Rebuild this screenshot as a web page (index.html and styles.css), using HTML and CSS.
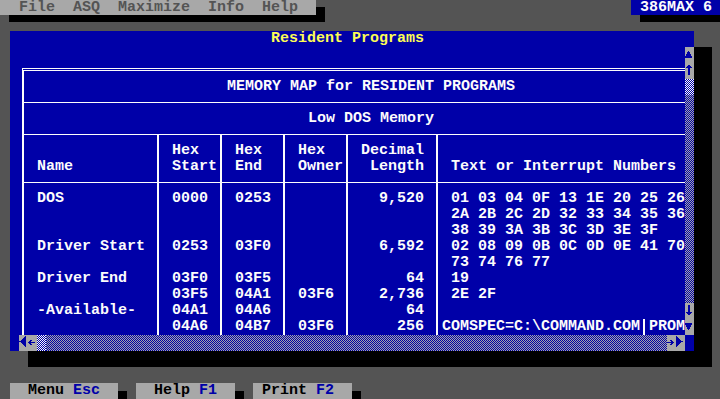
FILE: index.html
```html
<!DOCTYPE html>
<html lang="en">
<head>
<meta charset="utf-8">
<title>386MAX - Resident Programs</title>
<link rel="stylesheet" href="styles.css">
</head>
<body>
<div class="screen">
  <header class="topbar">
    <nav class="menubar"><span>File</span><span>ASQ</span><span>Maximize</span><span>Info</span><span>Help</span></nav>
    <div class="brand">386MAX 6</div>
  </header>

  <section class="window">
    <h1 class="wtitle">Resident Programs</h1>
    <div class="wbody">
      <div class="viewport">
        <div class="maptable">
          <div class="cap">MEMORY MAP for RESIDENT PROGRAMS</div>
          <div class="cap">Low DOS Memory</div>
          <div class="tr thead">
            <div class="td"><span>Name</span></div>
            <div class="td"><span>Hex</span><span>Start</span></div>
            <div class="td"><span>Hex</span><span>End</span></div>
            <div class="td"><span>Hex</span><span>Owner</span></div>
            <div class="td num"><span>Decimal</span><span>Length</span></div>
            <div class="td"><span>Text or Interrupt Numbers</span></div>
          </div>
          <div class="tr first">
            <div class="td">DOS</div><div class="td">0000</div><div class="td">0253</div><div class="td"></div><div class="td num">9,520</div><div class="td">01 03 04 0F 13 1E 20 25 26</div>
          </div>
          <div class="tr">
            <div class="td"></div><div class="td"></div><div class="td"></div><div class="td"></div><div class="td num"></div><div class="td">2A 2B 2C 2D 32 33 34 35 36</div>
          </div>
          <div class="tr">
            <div class="td"></div><div class="td"></div><div class="td"></div><div class="td"></div><div class="td num"></div><div class="td">38 39 3A 3B 3C 3D 3E 3F</div>
          </div>
          <div class="tr">
            <div class="td">Driver Start</div><div class="td">0253</div><div class="td">03F0</div><div class="td"></div><div class="td num">6,592</div><div class="td">02 08 09 0B 0C 0D 0E 41 70</div>
          </div>
          <div class="tr">
            <div class="td"></div><div class="td"></div><div class="td"></div><div class="td"></div><div class="td num"></div><div class="td">73 74 76 77</div>
          </div>
          <div class="tr">
            <div class="td">Driver End</div><div class="td">03F0</div><div class="td">03F5</div><div class="td"></div><div class="td num">64</div><div class="td">19</div>
          </div>
          <div class="tr">
            <div class="td"></div><div class="td">03F5</div><div class="td">04A1</div><div class="td">03F6</div><div class="td num">2,736</div><div class="td">2E 2F</div>
          </div>
          <div class="tr">
            <div class="td">-Available-</div><div class="td">04A1</div><div class="td">04A6</div><div class="td"></div><div class="td num">64</div><div class="td"></div>
          </div>
          <div class="tr">
            <div class="td"></div><div class="td">04A6</div><div class="td">04B7</div><div class="td">03F6</div><div class="td num">256</div><div class="td env">COMSPEC=C:\COMMAND.COM<span class="bar"></span>PROM</div>
          </div>
        </div>
      </div>

      <div class="vscroll">
        <div class="sbtn"><svg viewBox="0 0 9 16" width="9" height="16"><path d="M3 4h1v1h-1z M2 5h3v2h-3z M1 7h5v2h-5z M0 9h7v2h-7z"/></svg></div>
        <div class="sbtn"><svg viewBox="0 0 9 16" width="9" height="16"><path d="M3 2h2v1h-2z M2 3h4v1h-4z M1 4h6v1h-6z M3 5h2v7h-2z"/></svg></div>
        <div class="thumb"></div>
        <div class="track"></div>
        <div class="sbtn"><svg viewBox="0 0 9 16" width="9" height="16"><path d="M3 2h2v7h-2z M1 9h6v1h-6z M2 10h4v1h-4z M3 11h2v1h-2z"/></svg></div>
        <div class="sbtn"><svg viewBox="0 0 9 16" width="9" height="16"><path d="M0 4h7v2h-7z M1 6h5v2h-5z M2 8h3v2h-3z M3 10h1v1h-1z"/></svg></div>
      </div>

      <div class="hscroll">
        <div class="sbtn"><svg viewBox="0 0 9 16" width="9" height="16"><path d="M6 1h1v1h-1z M5 2h2v1h-2z M4 3h3v1h-3z M3 4h4v1h-4z M2 5h5v1h-5z M0 6h7v1h-7z M2 7h5v1h-5z M3 8h4v1h-4z M4 9h3v1h-3z M5 10h2v1h-2z M6 11h1v1h-1z"/></svg></div>
        <div class="sbtn"><svg viewBox="0 0 9 16" width="9" height="16"><path d="M2 5h2v1h-2z M1 6h2v1h-2z M0 7h7v1h-7z M1 8h2v1h-2z M2 9h2v1h-2z"/></svg></div>
        <div class="thumb"></div>
        <div class="track"></div>
        <div class="sbtn"><svg viewBox="0 0 9 16" width="9" height="16"><path d="M3 5h2v1h-2z M4 6h2v1h-2z M0 7h7v1h-7z M4 8h2v1h-2z M3 9h2v1h-2z"/></svg></div>
        <div class="sbtn"><svg viewBox="0 0 9 16" width="9" height="16"><path d="M0 1h1v1h-1z M0 2h2v1h-2z M0 3h3v1h-3z M0 4h4v1h-4z M0 5h5v1h-5z M0 6h7v1h-7z M0 7h5v1h-5z M0 8h4v1h-4z M0 9h3v1h-3z M0 10h2v1h-2z M0 11h1v1h-1z"/></svg></div>
      </div>
    </div>
  </section>

  <footer class="fkeys">
    <div class="fkey wide">  Menu <b>Esc</b></div>
    <div class="fkey">  Help <b>F1</b></div>
    <div class="fkey"> Print <b>F2</b></div>
  </footer>
</div>
</body>
</html>
```

FILE: styles.css
```css
* { box-sizing: border-box; }

html, body {
  margin: 0;
  height: 100%;
  background: #545454;
  overflow: hidden;
}

body {
  font: bold 15px/16px "Liberation Mono", "DejaVu Sans Mono", monospace;
  color: #fcfcfc;
}

.screen {
  width: 720px;
  height: 399px;
  margin-left: 1px;
  display: flex;
  flex-direction: column;
}

/* top menu row */
.topbar {
  height: 15px;
  flex: none;
  display: flex;
  justify-content: space-between;
}

.menubar {
  width: 316px;
  margin-left: -1px;
  padding-left: 19px;
  display: flex;
  gap: 18px;
  background: #a8a8a8;
  color: #545454;
  box-shadow: 9px 7px 0 #000;
}

.brand {
  width: 90px;
  padding-left: 9px;
  background: #0000a8;
  color: #fcfcfc;
  white-space: pre;
  box-shadow: 9px 7px 0 #000;
}

/* window */
.window {
  flex: none;
  margin: 16px 0 0 9px;
  width: 684px;
  height: 320px;
  background: #0000a8;
  box-shadow: 18px 16px 0 #000;
}

.wtitle {
  margin: 0;
  height: 16px;
  font: inherit;
  color: #fcfc54;
  padding-left: 261px;
}

.wbody {
  display: grid;
  grid-template-columns: 9px 666px 9px;
  grid-template-rows: 288px 16px;
}

.viewport {
  grid-column: 2;
  grid-row: 1;
  overflow: hidden;
  padding: 21px 0 0 3px;
}

/* memory map table */
.maptable {
  width: 696px;
  border-top: 3px double #fcfcfc;
  border-left: 2px solid #fcfcfc;
}

.cap {
  padding: 8px 0 7px;
  text-align: center;
  border-bottom: 1px solid #fcfcfc;
  white-space: pre;
}

.tr {
  display: grid;
  grid-template-columns: 133px 63px 63px 63px 90px 282px;
}

.td {
  min-height: 16px;
  padding-left: 13px;
  border-left: 2px solid #fcfcfc;
  white-space: pre;
}

.td:first-child { border-left: 0; }

.num {
  text-align: right;
  padding-right: 12px;
}

.thead { border-bottom: 1px solid #fcfcfc; }

.thead .td {
  padding-top: 8px;
  padding-bottom: 7px;
  display: flex;
  flex-direction: column;
  justify-content: flex-end;
}

.thead .num { align-items: flex-end; }

.first .td { padding-top: 8px; }

.env { padding-left: 4px; }

.bar {
  display: inline-block;
  width: 9px;
  height: 16px;
  vertical-align: top;
  background: linear-gradient(#fcfcfc, #fcfcfc) 3px 0 / 2px 100% no-repeat;
}

/* scroll bars */
.vscroll {
  grid-column: 3;
  grid-row: 1;
  display: grid;
  grid-template-rows: 16px 16px 16px 1fr 16px 16px;
}

.hscroll {
  grid-column: 2;
  grid-row: 2;
  display: grid;
  grid-template-columns: 9px 9px 9px 1fr 9px 9px;
}

.sbtn { background: #a8a8a8; }

.sbtn svg {
  display: block;
  fill: #0000a8;
  shape-rendering: crispEdges;
}

.track {
  background: repeating-conic-gradient(#0000a8 0 25%, #a8a8a8 0 50%) 0 0 / 2px 2px;
}

.thumb {
  background: repeating-conic-gradient(#0000a8 0 25%, #fcfcfc 0 50%) 0 0 / 2px 2px;
}

/* function keys */
.fkeys {
  flex: none;
  margin: 32px 0 0 9px;
  height: 16px;
  display: flex;
  gap: 18px;
}

.fkey {
  width: 99px;
  background: #a8a8a8;
  color: #000;
  white-space: pre;
  box-shadow: 9px 8px 0 #000;
}

.fkey.wide { width: 108px; }

.fkey b {
  font-weight: inherit;
  color: #0000a8;
}
```
